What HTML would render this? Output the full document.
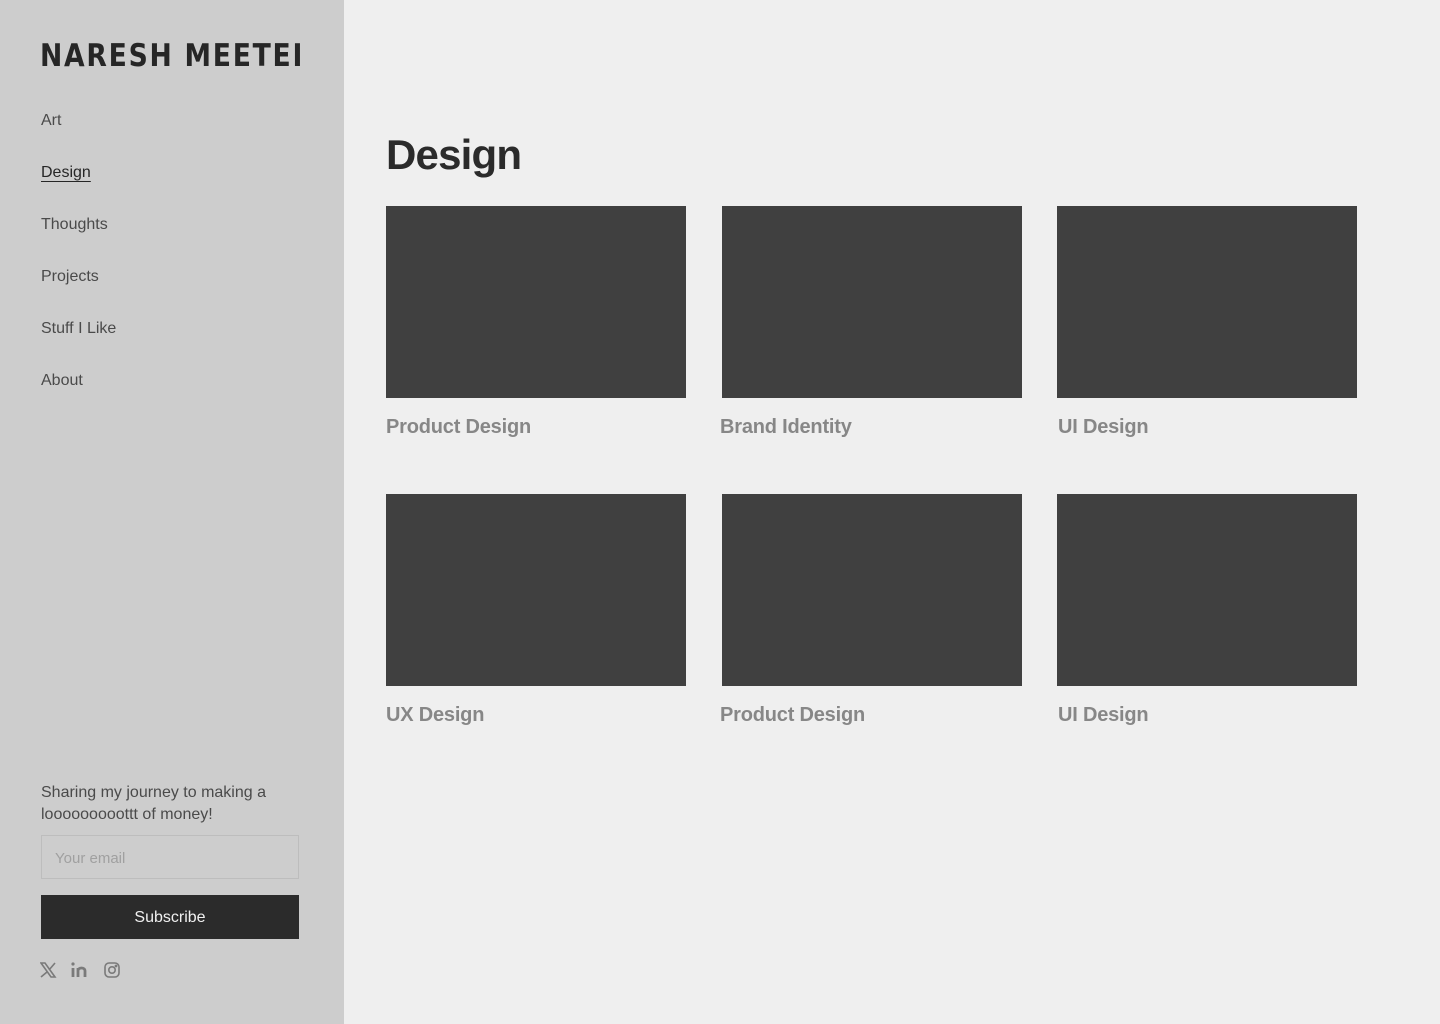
<!DOCTYPE html>
<html><head><meta charset="utf-8"><style>
*{margin:0;padding:0;box-sizing:border-box}
body{width:1440px;height:1024px;background:#efefef;font-family:"Liberation Sans",sans-serif;position:relative;overflow:hidden}
.side{position:absolute;left:0;top:0;width:344px;height:1024px;background:#cdcdcd}
.logo{position:absolute;left:40px;top:38px;font-family:"DejaVu Sans",sans-serif;font-weight:900;font-size:31px;letter-spacing:2px;color:#262626;transform:scaleX(0.86);transform-origin:left;white-space:nowrap}
.nav a{position:absolute;left:41px;font-size:16px;color:#4a4a4a;text-decoration:none}
.nav a.act{color:#262626;text-decoration:underline;text-underline-offset:4px}
.tag{position:absolute;left:41px;top:782px;font-size:16px;line-height:22px;color:#4a4a4a;width:260px}
.inp{position:absolute;left:41px;top:835px;width:258px;height:44px;border:1px solid #bdbdbd;background:#cdcdcd;color:#a0a0a0;font-size:15px;padding:14px 13px}
.btn{position:absolute;left:41px;top:895px;width:258px;height:44px;background:#2b2b2b;color:#f0f0f0;font-size:16px;text-align:center;line-height:46px}
h1{position:absolute;left:386px;top:131px;font-size:42px;letter-spacing:-0.8px;font-weight:700;color:#2b2b2b}
.card{position:absolute;width:300px;height:192px;background:#404040}
.lab{position:absolute;font-size:20px;letter-spacing:-0.2px;font-weight:700;color:#878787}
</style></head><body>
<div class="side">
<div class="logo">NARESH MEETEI</div>
<div class="nav">
<a style="top:112px">Art</a>
<a class="act" style="top:164px">Design</a>
<a style="top:216px">Thoughts</a>
<a style="top:268px">Projects</a>
<a style="top:320px">Stuff I Like</a>
<a style="top:372px">About</a>
</div>
<div class="tag">Sharing my journey to making a looooooooottt of money!</div>
<div class="inp">Your email</div>
<div class="btn">Subscribe</div>
<svg style="position:absolute;left:40px;top:961px" width="90" height="18" viewBox="0 0 90 18" fill="none" stroke="#7a7a7a" stroke-width="1.6">
<path d="M1 2h4l10 14h-4z M15 2L9 9 M7 11L1 16"/>
<path d="M33 7v9 M38 7v9 M38 10c0-4 7-4 7 0v6" stroke-width="2.8"/>
<circle cx="33" cy="3" r="1.6" fill="#7a7a7a" stroke="none"/>
<rect x="65" y="2" width="14" height="14" rx="4"/><circle cx="72" cy="9" r="3.2"/><circle cx="76" cy="5" r=".6" fill="#7a7a7a"/>
</svg>
</div>
<h1>Design</h1>
<div class="card" style="left:386px;top:206px"></div>
<div class="card" style="left:722px;top:206px"></div>
<div class="card" style="left:1057px;top:206px"></div>
<div class="card" style="left:386px;top:494px"></div>
<div class="card" style="left:722px;top:494px"></div>
<div class="card" style="left:1057px;top:494px"></div>
<div class="lab" style="left:386px;top:416px">Product Design</div>
<div class="lab" style="left:720px;top:416px">Brand Identity</div>
<div class="lab" style="left:1058px;top:416px">UI Design</div>
<div class="lab" style="left:386px;top:704px">UX Design</div>
<div class="lab" style="left:720px;top:704px">Product Design</div>
<div class="lab" style="left:1058px;top:704px">UI Design</div>
</body></html>
